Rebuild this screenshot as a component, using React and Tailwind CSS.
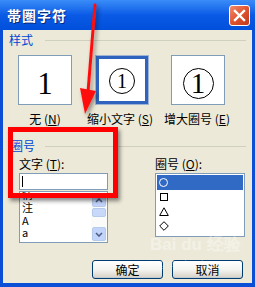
import React from "react";

const f = { fontFamily: '"Noto Sans CJK SC", "DejaVu Sans", sans-serif' };

function StyleBox({ selected, children }) {
  return (
    <div
      className={
        selected
          ? "w-[54px] h-[50px] border border-[#9fb3d3] p-0"
          : "w-[54px] h-[50px] border border-[#7F9DB9] bg-white"
      }
    >
      <div
        className={
          selected
            ? "w-full h-full border-[3px] border-[#2f63bd] bg-white relative"
            : "w-full h-full bg-white relative"
        }
      >
        {children}
      </div>
    </div>
  );
}

function Lines({ children, inset }) {
  return (
    <div className="absolute inset-0 flex flex-col items-center">
      <div className={inset ? "mt-[9px] w-[32px] h-px bg-[#b0b0b0]" : "mt-[12px] w-[32px] h-px bg-[#b0b0b0]"} />
      <div className="flex-1 w-full flex items-center justify-center">{children}</div>
      <div className={inset ? "mb-[8px] w-[32px] h-px bg-[#b0b0b0]" : "mb-[11px] w-[32px] h-px bg-[#b0b0b0]"} />
    </div>
  );
}

function XPButton({ children }) {
  return (
    <div className="w-[71px] h-[19px] rounded-[3px] border border-[#003C74] bg-gradient-to-b from-[#ffffff] via-[#f4f4f0] to-[#d6d0c5] flex items-center justify-center text-[12px] text-black shadow-[inset_0_-1px_0_#c1ccd1]">
      {children}
    </div>
  );
}

export default function App() {
  return (
    <div className="w-[255px] h-[287px] relative overflow-hidden bg-[#0a4fd6] select-none" style={f}>
      {/* title bar */}
      <div className="h-[30px] bg-gradient-to-b from-[#3a8cf8] via-[#0b5ae6] to-[#0150dc] flex items-center justify-between pl-[7px] pr-[5px]">
        <span className="text-white font-bold text-[14px] leading-none tracking-[1px] [text-shadow:1px_1px_0_#0a2a7a]">
          帯圏字符
        </span>
        <div className="w-[21px] h-[21px] rounded-[3px] border border-white bg-gradient-to-br from-[#f08a6c] via-[#e0532f] to-[#c0391a] flex items-center justify-center">
          <svg width="13" height="13" viewBox="0 0 13 13">
            <path d="M2 2 L11 11 M11 2 L2 11" stroke="white" strokeWidth="2.4" strokeLinecap="square" />
          </svg>
        </div>
      </div>

      {/* content */}
      <div className="mx-[3px] h-[253px] bg-[#ECE9D8] flex flex-col text-[12px] text-black">
        {/* 样式 header */}
        <div className="flex items-center mt-[3px] h-[14px] pl-[6px] pr-[6px]">
          <span className="text-[#0046D5] leading-none">样式</span>
          <div className="flex-1 h-px bg-[#D0D0BF] ml-[12px]" />
        </div>

        {/* style boxes */}
        <div className="flex mt-[8px] pl-[15px]">
          <div className="flex flex-col items-center w-[54px]">
            <StyleBox>
              <Lines>
                <span className="text-[31px] leading-none" style={{ fontFamily: '"Liberation Serif", serif' }}>1</span>
              </Lines>
            </StyleBox>
          </div>
          <div className="flex flex-col items-center w-[54px] ml-[23px]">
            <StyleBox selected>
              <Lines inset>
                <div className="w-[26px] h-[26px] rounded-full border border-black flex items-center justify-center">
                  <span className="text-[20px] leading-none" style={{ fontFamily: '"Liberation Serif", serif' }}>1</span>
                </div>
              </Lines>
            </StyleBox>
          </div>
          <div className="flex flex-col items-center w-[54px] ml-[22px]">
            <StyleBox>
              <Lines>
                <div className="w-[31px] h-[31px] rounded-full border border-black flex items-center justify-center">
                  <span className="text-[29px] leading-none" style={{ fontFamily: '"Liberation Serif", serif' }}>1</span>
                </div>
              </Lines>
            </StyleBox>
          </div>
        </div>

        {/* labels */}
        <div className="flex mt-[7px] h-[14px] leading-[14px]">
          <div className="w-[54px] ml-[15px] text-center whitespace-nowrap">无 (<u>N</u>)</div>
          <div className="w-[54px] ml-[23px] text-center whitespace-nowrap flex justify-center"><span className="-ml-[4px]">缩小文字 (<u>S</u>)</span></div>
          <div className="w-[54px] ml-[22px] text-center whitespace-nowrap flex justify-center"><span className="-ml-[2px]">增大圈号 (<u>E</u>)</span></div>
        </div>

        {/* 圈号 header */}
        <div className="flex items-center mt-[13px] h-[14px] pl-[8px] pr-[6px]">
          <span className="text-[#0046D5] leading-none">圈号</span>
          <div className="flex-1 h-px bg-[#D0D0BF] ml-[10px]" />
        </div>

        {/* two columns */}
        <div className="flex mt-[4px]">
          <div className="ml-[16px] w-[89px] flex flex-col">
            <div className="h-[14px] leading-[14px]">文字 (<u>T</u>):</div>
            <div className="mt-[2px] h-[17px] border border-[#7F9DB9] bg-white flex items-center pl-[2px]">
              <div className="w-px h-[11px] bg-black" />
            </div>
            <div className="mt-[1px] h-[52px] border border-[#7F9DB9] bg-white flex overflow-hidden">
              <div className="flex-1 flex flex-col pl-[2px] text-[11px] -mt-[4px]">
                <div className="h-[13px] leading-[13px]">情</div>
                <div className="h-[13px] leading-[13px]">注</div>
                <div className="h-[12px] leading-[12px]">A</div>
                <div className="h-[12px] leading-[12px]">a</div>
              </div>
              <div className="w-[16px] flex flex-col bg-[#fbfbf9] p-px">
                <div className="h-[14px] rounded-[2px] border border-[#b6caea] bg-[#c3d4fb] flex items-center justify-center">
                  <svg width="8" height="5" viewBox="0 0 8 5"><path d="M1 4 L4 1 L7 4" stroke="#4d6185" strokeWidth="1.6" fill="none" /></svg>
                </div>
                <div className="mt-[1px] h-[9px] rounded-[2px] border border-[#b6caea] bg-[#c8d8fb]" />
                <div className="flex-1" />
                <div className="h-[14px] rounded-[2px] border border-[#b6caea] bg-[#c3d4fb] flex items-center justify-center">
                  <svg width="8" height="5" viewBox="0 0 8 5"><path d="M1 1 L4 4 L7 1" stroke="#4d6185" strokeWidth="1.6" fill="none" /></svg>
                </div>
              </div>
            </div>
          </div>

          <div className="ml-[47px] w-[90px] flex flex-col">
            <div className="h-[14px] leading-[14px]">圈号 (<u>O</u>):</div>
            <div className="mt-[2px] h-[64px] border border-[#7F9DB9] bg-white flex flex-col pt-px px-px">
              <div className="h-[15px] bg-[#316AC5] flex items-center pl-[2px]">
                <div className="w-[9px] h-[9px] rounded-full border border-white" />
              </div>
              <div className="h-[14px] flex items-center pl-[3px]">
                <div className="w-[8px] h-[8px] border border-black" />
              </div>
              <div className="h-[15px] flex items-center pl-[2px]">
                <svg width="10" height="9" viewBox="0 0 10 9"><path d="M5 0.8 L9.3 8.5 L0.7 8.5 Z" stroke="black" strokeWidth="1" fill="none" /></svg>
              </div>
              <div className="h-[14px] flex items-center pl-[2px]">
                <svg width="10" height="10" viewBox="0 0 10 10"><path d="M5 0.7 L9.3 5 L5 9.3 L0.7 5 Z" stroke="black" strokeWidth="1" fill="none" /></svg>
              </div>
            </div>
          </div>
        </div>

        {/* buttons */}
        <div className="flex mt-[17px] ml-[89px] gap-[9px]">
          <XPButton>确定</XPButton>
          <XPButton>取消</XPButton>
        </div>
      </div>

      {/* watermark */}
      <div className="absolute left-[150px] top-[236px] text-white/40 text-[17px] font-bold leading-none pointer-events-none whitespace-nowrap" style={{ fontFamily: '"Liberation Sans", sans-serif' }}>
        Bai du 经验
      </div>
      <div className="absolute left-[150px] top-[259px] text-white/30 text-[10px] leading-none pointer-events-none whitespace-nowrap" style={{ fontFamily: '"Liberation Sans", sans-serif' }}>
        jingyan.baidu.com
      </div>

      {/* annotation: red rectangle */}
      <div className="absolute left-[8px] top-[127px] w-[110px] h-[71px] border-[5px] border-[#ff0000] shadow-[2px_3px_4px_rgba(0,0,0,0.45)] pointer-events-none" />

      {/* annotation: red arrow */}
      <svg className="absolute left-0 top-0 pointer-events-none" width="255" height="287" viewBox="0 0 255 287">
        <defs>
          <filter id="sh" x="-50%" y="-50%" width="200%" height="200%">
            <feDropShadow dx="2" dy="3" stdDeviation="2" floodColor="#000" floodOpacity="0.4" />
          </filter>
        </defs>
        <g filter="url(#sh)">
          <path d="M95 5 L88 92" stroke="#ff1010" strokeWidth="3" strokeLinecap="round" />
          <path d="M80 88 L96 91 L85 114 Z" fill="#ff1010" />
        </g>
      </svg>
    </div>
  );
}
